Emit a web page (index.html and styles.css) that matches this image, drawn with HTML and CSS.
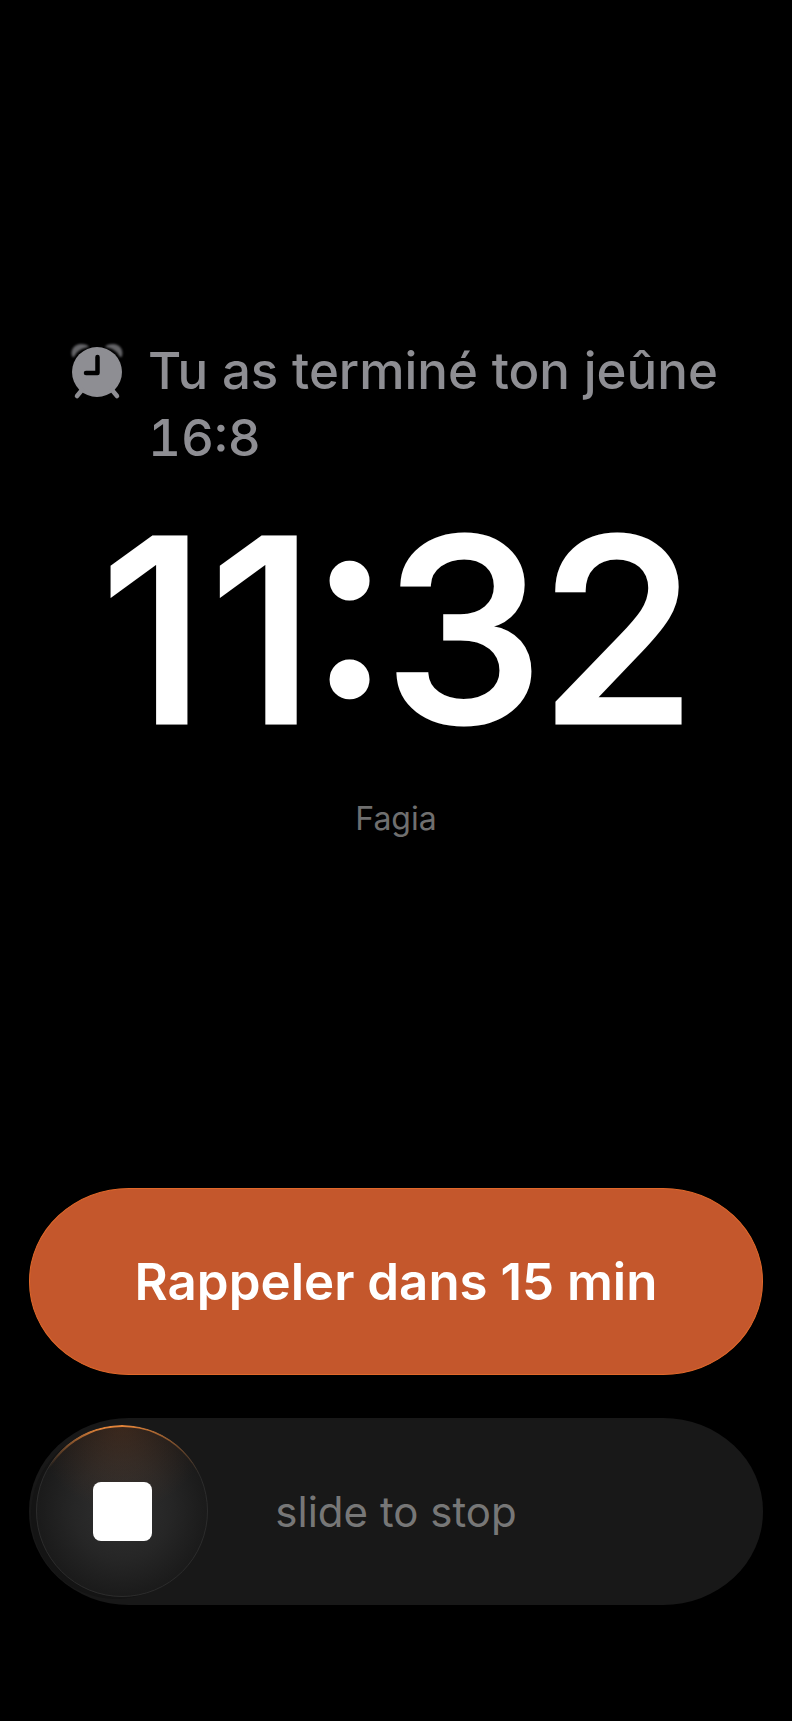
FILE: index.html
```html
<!DOCTYPE html>
<html lang="fr">
<head>
    <meta charset="UTF-8">
    <meta name="viewport" content="width=device-width, initial-scale=1.0">
    <title>Alarme</title>
    <link rel="stylesheet" href="styles.css">
</head>
<body>
    <main class="alarm-screen">
        <div class="alarm-title">
            <svg class="alarm-icon" width="60" height="64" viewBox="0 0 60 64">
                <defs>
                    <filter id="ear-blur" x="-30%" y="-30%" width="160%" height="160%">
                        <feGaussianBlur stdDeviation="1.3"/>
                    </filter>
                </defs>
                <g fill="#8e8e93">
                    <path filter="url(#ear-blur)" opacity="0.7" d="M5 19 C3 12 8 7 14 7 C18 7 21 8 22 10 C15 11 10 14 7 20 C6 20 5 20 5 19 Z"/>
                    <path filter="url(#ear-blur)" opacity="0.7" d="M55 19 C57 12 52 7 46 7 C42 7 39 8 38 10 C45 11 50 14 53 20 C54 20 55 20 55 19 Z"/>
                    <circle cx="30" cy="35" r="25"/>
                </g>
                <path d="M15 53 L10 59 M45 53 L50 59" stroke="#8e8e93" stroke-width="4.500" stroke-linecap="round"/>
                <path d="M30.500 20 V36 H19" fill="none" stroke="#000" stroke-width="4.500" stroke-linecap="round" stroke-linejoin="round"/>
            </svg>
            <div class="alarm-text">Tu as terminé ton jeûne 16:8</div>
        </div>
        <div class="clock"><span class="clock-one">1</span>1:32</div>
        <div class="app-name">Fagia</div>

        <div class="actions">
            <button class="snooze-btn">Rappeler dans 15 min</button>
            <div class="slider">
                <div class="slider-knob"><span class="stop-square"></span></div>
                <span class="slider-label">slide to stop</span>
            </div>
        </div>
    </main>
</body>
</html>
```

FILE: styles.css
```css
body, html {
    margin: 0;
    padding: 0;
    height: 100%;
    overflow: hidden;
    background-color: #000;
    font-family: Inter, "Liberation Sans", sans-serif;
}

.alarm-screen {
    display: flex;
    flex-direction: column;
    height: 1721px;
    padding: 337px 29px 0;
    box-sizing: border-box;
}

.alarm-title {
    display: flex;
    align-items: flex-start;
    gap: 21px;
    padding-left: 38px;
}

.alarm-icon {
    flex: none;
}

.alarm-text {
    width: 600px;
    color: #8e8e93;
    font-size: 51px;
    font-weight: 500;
    font-feature-settings: "case", "tnum";
    line-height: 67px;
}

.clock {
    margin-top: 9px;
    color: #fff;
    font-size: 256px;
    font-weight: 500;
    font-feature-settings: "case";
    line-height: 300px;
    letter-spacing: -5px;
    text-align: center;
    -webkit-text-stroke: 3px #fff;
    stroke-linejoin: round;
}

.clock-one {
    letter-spacing: 3px;
}

.app-name {
    margin-top: 19px;
    color: #6f6f6f;
    font-size: 32px;
    line-height: 40px;
    text-align: center;
}

.actions {
    display: flex;
    flex-direction: column;
    gap: 43px;
    margin-top: 349px;
}

.snooze-btn {
    height: 187px;
    padding: 0;
    background-color: #c4572c;
    border: 1px solid #e0682a;
    border-radius: 100px / 93px;
    color: #fff;
    font-family: inherit;
    font-size: 51px;
    font-weight: 600;
}

.slider {
    position: relative;
    display: flex;
    align-items: center;
    justify-content: center;
    height: 187px;
    background-color: #181818;
    border-radius: 100px / 93px;
}

.slider-label {
    color: #777;
    font-size: 42px;
}

.slider-knob {
    position: absolute;
    left: 7px;
    top: 7px;
    display: flex;
    align-items: center;
    justify-content: center;
    width: 172px;
    height: 172px;
    box-sizing: border-box;
    border-radius: 50%;
    background:
        radial-gradient(circle at 50% 0, rgba(170, 85, 35, 0.22), rgba(170, 85, 35, 0) 45%),
        radial-gradient(circle at 50% 50%, #303030 0%, #262626 40%, #1a1a1a 72%);
    border: 1px solid #2c2c2c;
    box-shadow: -6px 3px 0 -1px #141414;
}

/* orange rim on the top of the knob */
.slider-knob::before {
    content: "";
    position: absolute;
    inset: -1px;
    padding: 1.5px;
    border-radius: 50%;
    background: conic-gradient(from 300deg, rgba(224, 130, 56, 0) 0deg, #e08238 45deg, #e08238 65deg, rgba(224, 130, 56, 0) 125deg, rgba(224, 130, 56, 0) 360deg);
    -webkit-mask: linear-gradient(#fff 0 0) content-box, linear-gradient(#fff 0 0);
    -webkit-mask-composite: xor;
    mask-composite: exclude;
}

.stop-square {
    width: 59px;
    height: 59px;
    background-color: #fff;
    border-radius: 8px;
}
```
